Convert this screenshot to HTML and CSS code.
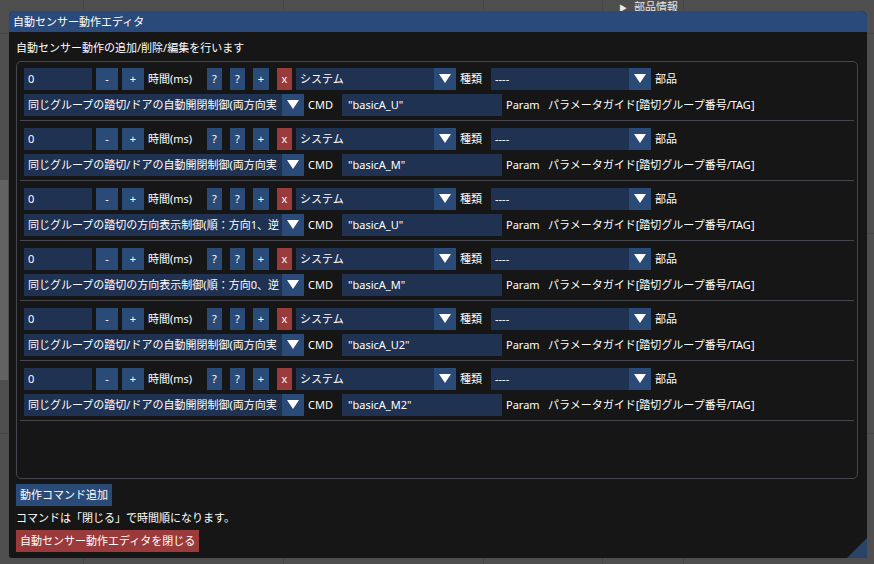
FILE: index.html
```html
<!DOCTYPE html>
<html>
<head>
    <meta charset="utf-8">
    <title>自動センサー動作エディタ</title>
    <link rel="stylesheet" href="styles.css">
</head>
<body>
<div class="desktop">
    <div class="side-strip"></div>

    <!-- Property tree that sits behind the editor window -->
    <div class="prop-panel">
        <div class="tree-item"><span class="tri">▶</span>部品情報</div>
    </div>

    <div class="window">
        <div class="title-bar">自動センサー動作エディタ</div>
        <div class="window-body">
            <div class="caption">自動センサー動作の追加/削除/編集を行います</div>

            <div class="child">
                <div class="cmd-row">
                    <div class="line">
                        <div class="field time-field">0</div>
                        <div class="btn sq">-</div>
                        <div class="btn sq">+</div>
                        <div class="label lbl-time">時間(ms)</div>
                        <div class="btn small sp">?</div>
                        <div class="btn small sp">?</div>
                        <div class="btn small sp wide">+</div>
                        <div class="btn small sp red">x</div>
                        <div class="combo sys-combo sp"><span class="combo-text">システム</span><span class="arrow"></span></div>
                        <div class="label lbl-kind">種類</div>
                        <div class="combo kind-combo"><span class="combo-text">----</span><span class="arrow"></span></div>
                        <div class="label">部品</div>
                    </div>
                    <div class="line">
                        <div class="combo act-combo"><span class="combo-text">同じグループの踏切/ドアの自動開閉制御(両方向実</span><span class="arrow"></span></div>
                        <div class="label lbl-cmd">CMD</div>
                        <div class="field cmd-field">"basicA_U"</div>
                        <div class="label lbl-param">Param</div>
                        <div class="label">パラメータガイド[踏切グループ番号/TAG]</div>
                    </div>
                </div>

                <div class="cmd-row">
                    <div class="line">
                        <div class="field time-field">0</div>
                        <div class="btn sq">-</div>
                        <div class="btn sq">+</div>
                        <div class="label lbl-time">時間(ms)</div>
                        <div class="btn small sp">?</div>
                        <div class="btn small sp">?</div>
                        <div class="btn small sp wide">+</div>
                        <div class="btn small sp red">x</div>
                        <div class="combo sys-combo sp"><span class="combo-text">システム</span><span class="arrow"></span></div>
                        <div class="label lbl-kind">種類</div>
                        <div class="combo kind-combo"><span class="combo-text">----</span><span class="arrow"></span></div>
                        <div class="label">部品</div>
                    </div>
                    <div class="line">
                        <div class="combo act-combo"><span class="combo-text">同じグループの踏切/ドアの自動開閉制御(両方向実</span><span class="arrow"></span></div>
                        <div class="label lbl-cmd">CMD</div>
                        <div class="field cmd-field">"basicA_M"</div>
                        <div class="label lbl-param">Param</div>
                        <div class="label">パラメータガイド[踏切グループ番号/TAG]</div>
                    </div>
                </div>

                <div class="cmd-row">
                    <div class="line">
                        <div class="field time-field">0</div>
                        <div class="btn sq">-</div>
                        <div class="btn sq">+</div>
                        <div class="label lbl-time">時間(ms)</div>
                        <div class="btn small sp">?</div>
                        <div class="btn small sp">?</div>
                        <div class="btn small sp wide">+</div>
                        <div class="btn small sp red">x</div>
                        <div class="combo sys-combo sp"><span class="combo-text">システム</span><span class="arrow"></span></div>
                        <div class="label lbl-kind">種類</div>
                        <div class="combo kind-combo"><span class="combo-text">----</span><span class="arrow"></span></div>
                        <div class="label">部品</div>
                    </div>
                    <div class="line">
                        <div class="combo act-combo"><span class="combo-text">同じグループの踏切の方向表示制御(順：方向1、逆</span><span class="arrow"></span></div>
                        <div class="label lbl-cmd">CMD</div>
                        <div class="field cmd-field">"basicA_U"</div>
                        <div class="label lbl-param">Param</div>
                        <div class="label">パラメータガイド[踏切グループ番号/TAG]</div>
                    </div>
                </div>

                <div class="cmd-row">
                    <div class="line">
                        <div class="field time-field">0</div>
                        <div class="btn sq">-</div>
                        <div class="btn sq">+</div>
                        <div class="label lbl-time">時間(ms)</div>
                        <div class="btn small sp">?</div>
                        <div class="btn small sp">?</div>
                        <div class="btn small sp wide">+</div>
                        <div class="btn small sp red">x</div>
                        <div class="combo sys-combo sp"><span class="combo-text">システム</span><span class="arrow"></span></div>
                        <div class="label lbl-kind">種類</div>
                        <div class="combo kind-combo"><span class="combo-text">----</span><span class="arrow"></span></div>
                        <div class="label">部品</div>
                    </div>
                    <div class="line">
                        <div class="combo act-combo"><span class="combo-text">同じグループの踏切の方向表示制御(順：方向0、逆</span><span class="arrow"></span></div>
                        <div class="label lbl-cmd">CMD</div>
                        <div class="field cmd-field">"basicA_M"</div>
                        <div class="label lbl-param">Param</div>
                        <div class="label">パラメータガイド[踏切グループ番号/TAG]</div>
                    </div>
                </div>

                <div class="cmd-row">
                    <div class="line">
                        <div class="field time-field">0</div>
                        <div class="btn sq">-</div>
                        <div class="btn sq">+</div>
                        <div class="label lbl-time">時間(ms)</div>
                        <div class="btn small sp">?</div>
                        <div class="btn small sp">?</div>
                        <div class="btn small sp wide">+</div>
                        <div class="btn small sp red">x</div>
                        <div class="combo sys-combo sp"><span class="combo-text">システム</span><span class="arrow"></span></div>
                        <div class="label lbl-kind">種類</div>
                        <div class="combo kind-combo"><span class="combo-text">----</span><span class="arrow"></span></div>
                        <div class="label">部品</div>
                    </div>
                    <div class="line">
                        <div class="combo act-combo"><span class="combo-text">同じグループの踏切/ドアの自動開閉制御(両方向実</span><span class="arrow"></span></div>
                        <div class="label lbl-cmd">CMD</div>
                        <div class="field cmd-field">"basicA_U2"</div>
                        <div class="label lbl-param">Param</div>
                        <div class="label">パラメータガイド[踏切グループ番号/TAG]</div>
                    </div>
                </div>

                <div class="cmd-row">
                    <div class="line">
                        <div class="field time-field">0</div>
                        <div class="btn sq">-</div>
                        <div class="btn sq">+</div>
                        <div class="label lbl-time">時間(ms)</div>
                        <div class="btn small sp">?</div>
                        <div class="btn small sp">?</div>
                        <div class="btn small sp wide">+</div>
                        <div class="btn small sp red">x</div>
                        <div class="combo sys-combo sp"><span class="combo-text">システム</span><span class="arrow"></span></div>
                        <div class="label lbl-kind">種類</div>
                        <div class="combo kind-combo"><span class="combo-text">----</span><span class="arrow"></span></div>
                        <div class="label">部品</div>
                    </div>
                    <div class="line">
                        <div class="combo act-combo"><span class="combo-text">同じグループの踏切/ドアの自動開閉制御(両方向実</span><span class="arrow"></span></div>
                        <div class="label lbl-cmd">CMD</div>
                        <div class="field cmd-field">"basicA_M2"</div>
                        <div class="label lbl-param">Param</div>
                        <div class="label">パラメータガイド[踏切グループ番号/TAG]</div>
                    </div>
                </div>
            </div>

            <div class="btn text-btn">動作コマンド追加</div>
            <div class="note">コマンドは「閉じる」で時間順になります。</div>
            <div class="btn text-btn red">自動センサー動作エディタを閉じる</div>
        </div>
        <div class="resize-grip"></div>
    </div>
</div>
</body>
</html>
```

FILE: styles.css
```css
/* Base */
body {
    margin: 0;
    background-color: #4e4e4e;
    font-family: "Noto Sans", "Noto Sans CJK JP", sans-serif;
    font-size: 11px;
    color: #fff;
}
.desktop {
    position: relative;
    width: 874px;
    height: 564px;
    overflow: hidden;
    background-color: #4e4e4e;
    background-image:
        linear-gradient(to right, #444 1px, transparent 1px),
        linear-gradient(to bottom, #444 1px, transparent 1px);
    background-size: 200px 200px;
    background-position: 83px 33px;
}
.side-strip {
    position: absolute;
    left: 0;
    top: 180px;
    width: 8px;
    height: 200px;
    background-color: #626262;
}

/* Panel behind the window */
.prop-panel {
    position: absolute;
    left: 602px;
    top: 0;
    width: 272px;
    height: 564px;
    border-left: 1px solid #444;
    color: #e8e8e8;
}
.tree-item {
    padding-left: 16px;
    line-height: 13px;
    white-space: nowrap;
}
.tri {
    display: inline-block;
    width: 15px;
    font-size: 8px;
}

/* Editor window */
.window {
    position: absolute;
    left: 9px;
    top: 11px;
    width: 858px;
    height: 547px;
    border-radius: 6px 6px 3px 3px;
    background-color: rgba(18, 18, 18, 0.93);
    overflow: hidden;
}
.title-bar {
    height: 21px;
    line-height: 21px;
    padding-left: 4px;
    background-color: #294a7a;
}
.window-body {
    display: flex;
    flex-direction: column;
    align-items: flex-start;
    padding: 7px 9px 0 7px;
}
.caption {
    height: 18px;
    line-height: 18px;
    margin-bottom: 4px;
}
.child {
    align-self: stretch;
    height: 410px;
    border: 1px solid #46464e;
    border-radius: 5px;
    padding: 6px 7px 0 7px;
    margin-bottom: 5px;
}

/* One command entry */
.cmd-row {
    border-bottom: 1px solid #46464e;
    margin: 0 -4px 7px -4px;
    padding: 0 4px 4px 4px;
}
.line {
    display: flex;
    gap: 4px;
    height: 22px;
    margin-bottom: 4px;
}
.line:last-child {
    margin-bottom: 0;
}
.line > * {
    flex: none;
}
.label {
    line-height: 22px;
    white-space: nowrap;
}
.lbl-time { width: 51px; }
.lbl-kind { width: 27px; }
.lbl-cmd { width: 30px; }
.lbl-param { width: 38px; }

.field {
    background-color: #1f3252;
    line-height: 22px;
    padding: 0 4px;
    box-sizing: border-box;
    white-space: nowrap;
}
.time-field { width: 68px; }
.cmd-field { width: 160px; padding-left: 6px; }

.btn {
    background-color: #2a4b77;
    text-align: center;
    line-height: 22px;
    height: 22px;
    box-sizing: border-box;
    white-space: nowrap;
}
.btn.sq { width: 22px; }
.btn.small { width: 15px; }
.btn.small.wide { width: 16px; }
.btn.sp { margin-left: 4px; }
.btn.red { background-color: #9b3a3a; }

.combo {
    display: flex;
    background-color: #1f3252;
    box-sizing: border-box;
    overflow: hidden;
}
.combo-text {
    flex: 1;
    min-width: 0;
    padding-left: 4px;
    line-height: 22px;
    white-space: nowrap;
    overflow: hidden;
}
.arrow {
    width: 22px;
    flex: none;
    background-color: #2a4b77;
    position: relative;
}
.arrow::after {
    content: "";
    position: absolute;
    left: 5px;
    top: 6px;
    border-left: 6px solid transparent;
    border-right: 6px solid transparent;
    border-top: 9px solid #fff;
}
.sys-combo { width: 160px; }
.kind-combo { width: 160px; }
.act-combo { width: 280px; }

/* Bottom area */
.text-btn {
    padding: 0 4px;
}
.note {
    height: 16px;
    line-height: 16px;
    margin: 4px 0;
}
.resize-grip {
    position: absolute;
    right: 0;
    bottom: 0;
    width: 0;
    height: 0;
    border-left: 20px solid transparent;
    border-bottom: 20px solid #2a4368;
}
```
